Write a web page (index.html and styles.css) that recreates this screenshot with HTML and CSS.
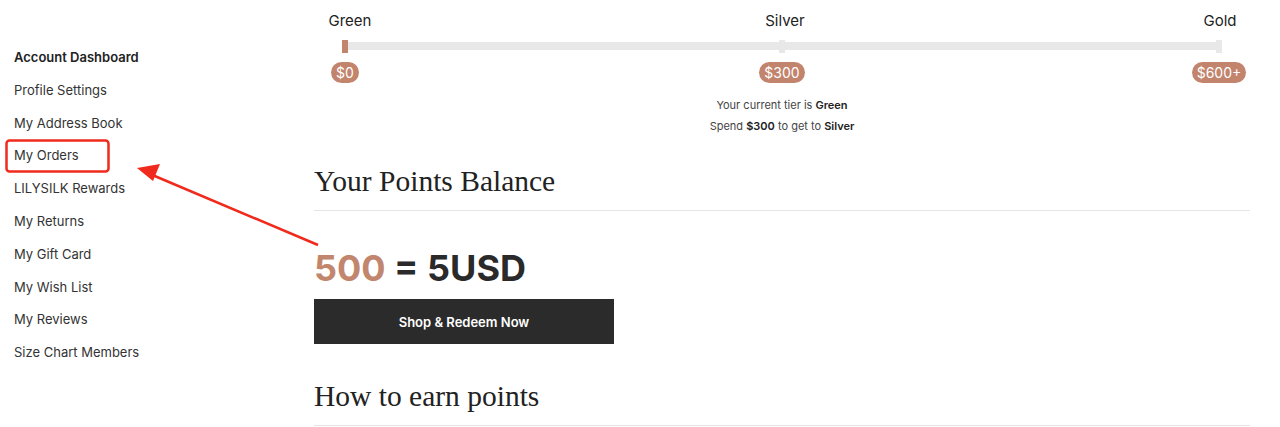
FILE: index.html
```html
<!DOCTYPE html>
<html lang="en">
<head>
    <meta charset="UTF-8">
    <meta name="viewport" content="width=device-width, initial-scale=1.0">
    <title>LILYSILK Rewards</title>
    <link rel="stylesheet" href="styles.css">
</head>
<body>
    <div class="container">
        <div class="sidebar">
            <ul class="menu">
                <li class="active">Account Dashboard</li>
                <li>Profile Settings</li>
                <li>My Address Book</li>
                <li>My Orders</li>
                <li>LILYSILK Rewards</li>
                <li>My Returns</li>
                <li>My Gift Card</li>
                <li>My Wish List</li>
                <li>My Reviews</li>
                <li>Size Chart Members</li>
            </ul>
        </div>
        <div class="main">
            <div class="tiers">
                <div class="tier-row tier-names">
                    <div class="tick"><span>Green</span></div>
                    <div class="tick"><span>Silver</span></div>
                    <div class="tick"><span>Gold</span></div>
                </div>
                <div class="track">
                    <div class="marker current"></div>
                    <div class="marker"></div>
                    <div class="marker"></div>
                </div>
                <div class="tier-row tier-prices">
                    <div class="tick"><span class="pill">$0</span></div>
                    <div class="tick"><span class="pill">$300</span></div>
                    <div class="tick"><span class="pill">$600+</span></div>
                </div>
                <div class="tier-info">
                    <p>Your current tier is <b>Green</b></p>
                    <p>Spend <b>$300</b> to get to <b>Silver</b></p>
                </div>
            </div>

            <h2 class="section-title">Your Points Balance</h2>
            <div class="balance"><span class="points">500</span> = 5USD</div>
            <button class="redeem-btn">Shop &amp; Redeem Now</button>

            <h2 class="section-title earn-title">How to earn points</h2>
        </div>
    </div>

    <!-- screenshot annotation -->
    <svg class="annotation" width="1280" height="427" viewBox="0 0 1280 427">
        <rect x="6.5" y="140.5" width="102" height="31" rx="3" fill="none" stroke="#f02a1c" stroke-width="2.5"/>
        <line x1="318" y1="245" x2="150" y2="174" stroke="#f02a1c" stroke-width="2.5"/>
        <polygon points="137,168 160,164 153,181" fill="#f02a1c"/>
    </svg>
</body>
</html>
```

FILE: styles.css
```css
body {
    margin: 0;
    font-family: Inter, "Liberation Sans", sans-serif;
    color: #222;
    background-color: #fff;
}
.container {
    display: flex;
}
.sidebar {
    width: 300px;
    padding: 41px 0 0 14px;
}
.menu {
    list-style: none;
    margin: 0;
    padding: 0;
}
.menu li {
    font-size: 13px;
    line-height: 32.8px;
    color: #333;
}
.menu li.active {
    font-weight: 600;
    color: #222;
}
.main {
    width: 936px;
}
.tiers {
    padding: 11px 28px 0 28px;
}
.tier-row {
    display: flex;
    justify-content: space-between;
}
.tick {
    width: 0;
    display: flex;
    justify-content: center;
    white-space: nowrap;
}
.tier-names {
    font-size: 15px;
    line-height: 20px;
    color: #222;
    padding: 0 2px 0 8px;
}
.track {
    margin-top: 11px;
    height: 8px;
    background-color: #e8e8e8;
    display: flex;
    justify-content: space-between;
    align-items: center;
}
.marker {
    width: 6px;
    height: 13px;
    background-color: #e8e8e8;
}
.marker.current {
    background-color: #c2846d;
}
.tier-prices {
    margin-top: 12px;
    padding: 0 3px;
}
.pill {
    display: inline-block;
    background-color: #c2846d;
    color: #fff;
    font-size: 14px;
    line-height: 21px;
    padding: 0 5px;
    border-radius: 11px;
}
.tier-info {
    margin-top: 12px;
    text-align: center;
    font-size: 11px;
    line-height: 21px;
    color: #444;
}
.tier-info p {
    margin: 0;
}
.tier-info b {
    font-weight: 600;
    color: #222;
}
.section-title {
    font-family: "Liberation Serif", serif;
    font-weight: normal;
    font-size: 29.5px;
    color: #222;
    margin: 28px 0 0;
    padding-bottom: 12px;
    border-bottom: 1px solid #e5e5e5;
}
.earn-title {
    margin-top: 36px;
}
.balance {
    margin-top: 34px;
    font-size: 36px;
    font-weight: 700;
    line-height: 46px;
    color: #2a2a2a;
}
.points {
    color: #c2866e;
}
.redeem-btn {
    display: block;
    margin-top: 8px;
    width: 300px;
    height: 45px;
    background-color: #2b2b2b;
    color: #fff;
    border: none;
    font-family: Inter, "Liberation Sans", sans-serif;
    font-size: 13px;
    font-weight: 600;
}
.annotation {
    position: absolute;
    left: 0;
    top: 0;
    pointer-events: none;
}
```
